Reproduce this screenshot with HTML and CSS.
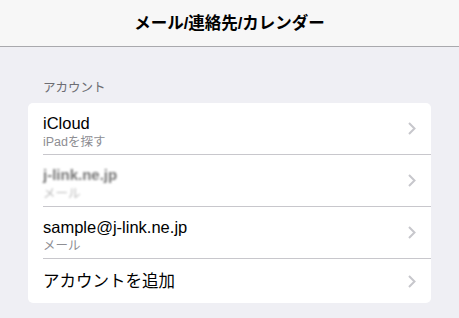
FILE: index.html
```html
<!DOCTYPE html>
<html lang="ja">
<head>
    <meta charset="UTF-8">
    <meta name="viewport" content="width=device-width, initial-scale=1.0">
    <title>メール/連絡先/カレンダー</title>
    <link rel="stylesheet" href="styles.css">
</head>
<body>
    <div class="navbar">
        <h1>メール/連絡先/カレンダー</h1>
    </div>

    <div class="section">
        <p class="section-title">アカウント</p>
        <div class="card">
            <div class="row">
                <div class="row-text">
                    <div class="row-title">iCloud</div>
                    <div class="row-sub">iPadを探す</div>
                </div>
                <svg class="chevron" width="8" height="13" viewBox="0 0 8 13"><polyline points="1,1 6.5,6.5 1,12" /></svg>
            </div>
            <div class="row">
                <div class="row-text blurred">
                    <div class="row-title">j-link.ne.jp</div>
                    <div class="row-sub">メール</div>
                </div>
                <svg class="chevron" width="8" height="13" viewBox="0 0 8 13"><polyline points="1,1 6.5,6.5 1,12" /></svg>
            </div>
            <div class="row">
                <div class="row-text">
                    <div class="row-title">sample@j-link.ne.jp</div>
                    <div class="row-sub">メール</div>
                </div>
                <svg class="chevron" width="8" height="13" viewBox="0 0 8 13"><polyline points="1,1 6.5,6.5 1,12" /></svg>
            </div>
            <div class="row row-single">
                <div class="row-text">
                    <div class="row-title">アカウントを追加</div>
                </div>
                <svg class="chevron" width="8" height="13" viewBox="0 0 8 13"><polyline points="1,1 6.5,6.5 1,12" /></svg>
            </div>
        </div>
    </div>
</body>
</html>
```

FILE: styles.css
```css
body {
    font-family: "Liberation Sans", "Noto Sans CJK JP", sans-serif;
    background-color: #efeff4;
    color: #000;
    margin: 0;
    padding: 0;
}

.navbar {
    height: 46px;
    background-color: #f7f7f7;
    border-bottom: 1px solid #a9a9ad;
    display: flex;
    align-items: center;
    justify-content: center;
}

.navbar h1 {
    margin: 0;
    font-size: 16.5px;
    font-weight: bold;
    line-height: 20px;
}

.section {
    padding: 33px 28px 0;
}

.section-title {
    margin: 0 0 7px 15px;
    font-size: 12.5px;
    line-height: 16px;
    color: #6d6d72;
}

.card {
    background-color: #fff;
    border-radius: 5px;
    padding-left: 15px;
}

.row {
    display: flex;
    align-items: center;
    height: 51px;
    padding-right: 15px;
    border-bottom: 1px solid #c8c7cc;
}

.row-single {
    height: 44px;
    border-bottom: none;
}

.row-text {
    flex: 1;
    padding-top: 6px;
}

.row-title {
    font-size: 16.5px;
    line-height: 20px;
}

.row-sub {
    margin-top: 1px;
    font-size: 12.5px;
    line-height: 17px;
    color: #8e8e93;
}

/* ぼかし処理 */
.blurred {
    filter: blur(1.3px);
}

.blurred .row-title {
    color: #777;
    font-weight: bold;
    font-size: 15px;
}

.blurred .row-sub {
    color: #bbb;
}

.row-single .row-text {
    padding-top: 0;
}

.chevron polyline {
    fill: none;
    stroke: #c7c7cc;
    stroke-width: 2;
}
```
